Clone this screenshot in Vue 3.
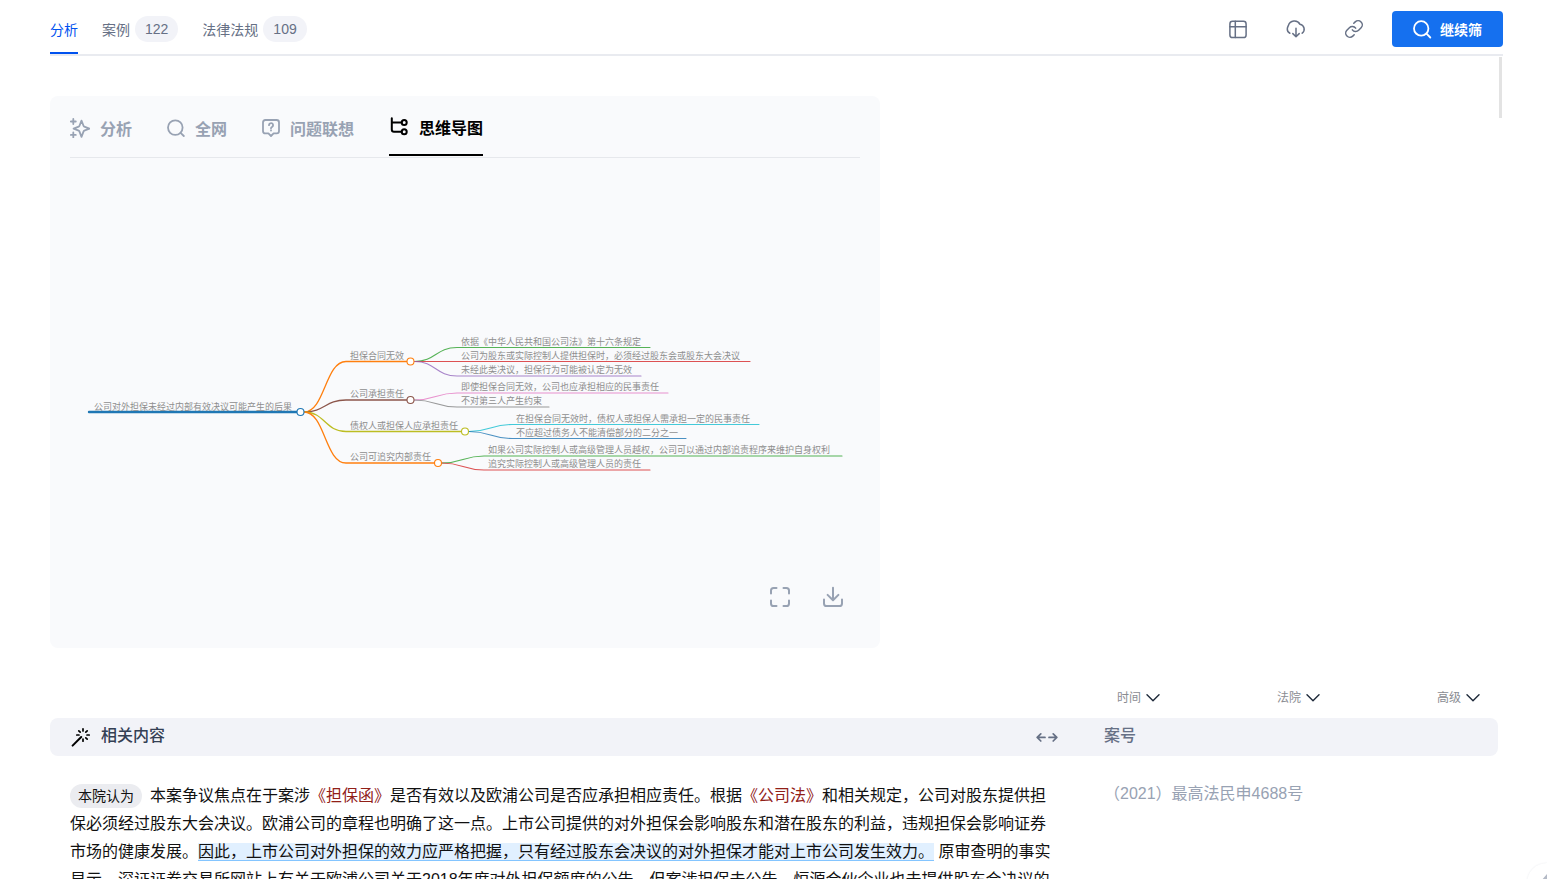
<script setup>
import { ref } from 'vue'

const topTabs = [
  { name: '分析' },
  { name: '案例', count: 122 },
  { name: '法律法规', count: 109 }
]
const currentTop = ref('分析')

const cardTabs = [
  { name: '分析', icon: 'spark' },
  { name: '全网', icon: 'search' },
  { name: '问题联想', icon: 'question' },
  { name: '思维导图', icon: 'tree' }
]
const currentCard = ref('思维导图')

const filters = ['时间', '法院', '高级']

const root = { text: '公司对外担保未经过内部有效决议可能产生的后果', x: 19, y: 254, end: 230, color: '#1f77b4' }
const branches = [
  {
    text: '担保合同无效', y: 203.5, end: 340.5, color: '#ff7f0e', x: 387,
    leaves: [
      { text: '依据《中华人民共和国公司法》第十六条规定', y: 189.5, end: 580, color: '#2ca02c' },
      { text: '公司为股东或实际控制人提供担保时，必须经过股东会或股东大会决议', y: 203.5, end: 680, color: '#d62728' },
      { text: '未经此类决议，担保行为可能被认定为无效', y: 218, end: 571, color: '#9467bd' }
    ]
  },
  {
    text: '公司承担责任', y: 242, end: 340.5, color: '#8c564b', x: 387,
    leaves: [
      { text: '即使担保合同无效，公司也应承担相应的民事责任', y: 235, end: 598, color: '#e377c2' },
      { text: '不对第三人产生约束', y: 249, end: 479, color: '#7f7f7f' }
    ]
  },
  {
    text: '债权人或担保人应承担责任', y: 273.5, end: 395, color: '#bcbd22', x: 442,
    leaves: [
      { text: '在担保合同无效时，债权人或担保人需承担一定的民事责任', y: 266.5, end: 689, color: '#17becf' },
      { text: '不应超过债务人不能清偿部分的二分之一', y: 280.5, end: 616, color: '#1f77b4' }
    ]
  },
  {
    text: '公司可追究内部责任', y: 305, end: 368, color: '#ff7f0e', x: 414,
    leaves: [
      { text: '如果公司实际控制人或高级管理人员越权，公司可以通过内部追责程序来维护自身权利', y: 298, end: 772, color: '#2ca02c' },
      { text: '追究实际控制人或高级管理人员的责任', y: 312, end: 580, color: '#d62728' }
    ]
  }
]

function link(x1, y1, x2, y2, end) {
  const mid = (x1 + x2) / 2
  return `M${x1} ${y1}C${mid} ${y1} ${mid} ${y2} ${x2} ${y2}H${end}`
}
</script>

<template>
  <div class="page">
    <header class="top">
      <nav class="top-tabs">
        <button
          v-for="t in topTabs"
          :key="t.name"
          type="button"
          class="top-tab"
          :class="{ on: currentTop === t.name }"
          @click="currentTop = t.name"
        >
          <span>{{ t.name }}</span>
          <span v-if="t.count" class="count">{{ t.count }}</span>
        </button>
      </nav>
      <div class="tools">
        <button type="button" class="icon-btn" aria-label="表格">
          <svg viewBox="0 0 20 20" width="20" height="20" class="line">
            <rect x="1.9" y="2.3" width="16.2" height="16.2" rx="2.6" />
            <path d="M1.9 7.7H18.1M7.3 2.3V18.5" />
          </svg>
        </button>
        <button type="button" class="icon-btn" aria-label="云下载">
          <svg viewBox="0 0 20 20" width="20" height="20" class="line">
            <path d="M3.9 14.2A4.4 4.4 0 0 1 1.3 10C1.3 8.6 1.9 7.5 2.4 6.5A6.3 6.3 0 0 1 14 5.3A5 5 0 0 1 16.2 14.2" />
            <path d="M10 9.3V17.6M6.8 14.6L10 17.8L13.2 14.6" />
          </svg>
        </button>
        <button type="button" class="icon-btn" aria-label="复制链接">
          <svg viewBox="0 0 24 24" width="20" height="20" class="line link">
            <path d="M10 13a5 5 0 0 0 7.54.54l3-3a5 5 0 0 0-7.07-7.07l-1.72 1.71" />
            <path d="M14 11a5 5 0 0 0-7.54-.54l-3 3a5 5 0 0 0 7.07 7.07l1.71-1.71" />
          </svg>
        </button>
        <button type="button" class="primary">
          <svg viewBox="0 0 20 20" width="20" height="20">
            <circle cx="9.2" cy="9.4" r="7.2" />
            <path d="M14.5 14.7L18.3 18.5" />
          </svg>
          <span>继续筛</span>
        </button>
      </div>
    </header>

    <main class="body">
      <section class="card">
        <nav class="card-tabs">
          <button
            v-for="t in cardTabs"
            :key="t.name"
            type="button"
            class="card-tab"
            :class="{ on: currentCard === t.name }"
            @click="currentCard = t.name"
          >
            <svg v-if="t.icon === 'spark'" viewBox="0 0 20 20" width="20" height="20">
              <path d="M11.5 2.6L13.6 8Q13.8 8.5 14.3 8.7L19.4 10.7L14.3 12.7Q13.8 12.9 13.6 13.4L11.5 18.8L9.4 13.4Q9.2 12.9 8.7 12.7L3.6 10.7L8.7 8.7Q9.2 8.5 9.4 8Z" />
              <path d="M3.3 1V6M.8 3.5H5.8M3.3 14.4V19.4M.8 16.9H5.8" />
            </svg>
            <svg v-else-if="t.icon === 'search'" viewBox="0 0 18 18" width="18" height="18">
              <circle cx="8.3" cy="8.6" r="7.3" />
              <path d="M13.6 13.9L16.8 17" />
            </svg>
            <svg v-else-if="t.icon === 'question'" viewBox="0 0 18 18" width="18" height="18">
              <path d="M3.4 1H14.6Q17 1 17 3.4V12Q17 14.4 14.6 14.4H11.6L9 17L6.4 14.4H3.4Q1 14.4 1 12V3.4Q1 1 3.4 1Z" />
              <path d="M7 6.2A2.05 2.05 0 1 1 10.2 7.8Q9 8.3 9 9.2M9 11.2V11.5" />
            </svg>
            <svg v-else viewBox="0 0 20 20" width="20" height="20">
              <path d="M2.8 1.2V12.6Q2.8 14.8 5 14.8H12.6M2.8 5.4H12.6" />
              <circle cx="15.2" cy="5.4" r="2.5" />
              <circle cx="15.2" cy="14.8" r="2.5" />
            </svg>
            <span>{{ t.name }}</span>
          </button>
        </nav>

        <svg class="map" viewBox="0 0 790 400" role="img" aria-label="思维导图">
          <path :d="`M${root.x} ${root.y}H${root.end}`" :stroke="root.color" stroke-width="2.4" />
          <text :x="24" :y="root.y - 2">{{ root.text }}</text>
          <g v-for="b in branches" :key="b.text">
            <path :d="link(234, root.y, 276, b.y, b.end)" :stroke="b.color" stroke-width="1.3" />
            <text x="280" :y="b.y - 3">{{ b.text }}</text>
            <g v-for="l in b.leaves" :key="l.text">
              <path :d="link(b.end + 4, b.y, b.x, l.y, l.end)" :stroke="l.color" stroke-width="1.1" class="leaf" />
              <text :x="b.x + 4" :y="l.y - 3">{{ l.text }}</text>
            </g>
            <circle :cx="b.end" :cy="b.y" r="3.5" :stroke="b.color" />
          </g>
          <circle :cx="root.end + 0.5" :cy="root.y" r="3.5" :stroke="root.color" />
        </svg>

        <div class="card-tools">
          <button type="button" class="icon-btn" aria-label="全屏">
            <svg viewBox="0 0 22 22" width="22" height="22" class="thick">
              <path d="M2 7.5V4.6Q2 2 4.6 2H7.5M14.5 2H17.4Q20 2 20 4.6V7.5M20 14.5V17.4Q20 20 17.4 20H14.5M7.5 20H4.6Q2 20 2 17.4V14.5" />
            </svg>
          </button>
          <button type="button" class="icon-btn" aria-label="下载">
            <svg viewBox="0 0 22 22" width="22" height="22" class="thick">
              <path d="M11 1.8V14M5.6 8.9L11 14.3L16.4 8.9M2 13.4V17.4Q2 20 4.6 20H17.4Q20 20 20 17.4V13.4" />
            </svg>
          </button>
        </div>
      </section>

      <div class="filters">
        <button v-for="f in filters" :key="f" type="button" class="filter" aria-haspopup="listbox">
          <span>{{ f }}</span>
          <svg viewBox="0 0 14 8" width="14" height="8"><path d="M1 .8L7 6.8L13 .8" /></svg>
        </button>
      </div>

      <table class="results">
        <thead>
          <tr>
            <th class="main-col">
              <div class="head">
                <svg class="wand" viewBox="0 0 20 20" width="20" height="20">
                  <path d="M1.6 18.6L10.2 10" stroke-width="2" />
                  <path d="M12 1.8V4M12 12V14.2M5.8 8H8M16 8H18.2M7.8 3.8L9.2 5.2M16.2 3.8L14.8 5.2M14.8 10.8L16.2 12.2" stroke-width="1.7" />
                </svg>
                <span class="head-name">相关内容</span>
                <button type="button" class="icon-btn" aria-label="调整列宽">
                  <svg viewBox="0 0 22 10" width="22" height="10" class="arrows">
                    <path d="M9 5.4H1.4M4.8 1.8L1.2 5.4L4.8 9M13 5.4H20.6M17.2 1.8L20.8 5.4L17.2 9" />
                  </svg>
                </button>
              </div>
            </th>
            <th class="no-col"><div class="head-no">案号</div></th>
          </tr>
        </thead>
        <tbody>
          <tr>
            <td class="text"><span class="tag">本院认为</span>本案争议焦点在于案涉<span class="law">《担保函》</span>是否有效以及欧浦公司是否应承担相应责任。根据<span class="law">《公司法》</span>和相关规定，公司对股东提供担保必须经过股东大会决议。欧浦公司的章程也明确了这一点。上市公司提供的对外担保会影响股东和潜在股东的利益，违规担保会影响证券市场的健康发展。<mark>因此，上市公司对外担保的效力应严格把握，只有经过股东会决议的对外担保才能对上市公司发生效力。</mark> 原审查明的事实显示，深证证券交易所网站上有关于欧浦公司关于2018年度对外担保额度的公告，但案涉担保未公告，恒源合伙企业也未提供股东会决议的</td>
            <td class="no">（2021）最高法民申4688号</td>
          </tr>
        </tbody>
      </table>
      <div class="thumb"></div>
    </main>

    <button type="button" class="float" aria-label="回到顶部">
      <svg viewBox="0 0 18 18" width="18" height="18"><path d="M9 0L3 7H6V16H12V7H15Z" /></svg>
    </button>
  </div>
</template>

<style>
body {
  margin: 0;
  background: #fff;
}
</style>

<style scoped>
.page {
  display: flex;
  flex-direction: column;
  box-sizing: border-box;
  height: 100vh;
  padding: 0 44px 0 50px;
  overflow: hidden;
  font-family: "Liberation Sans", "Noto Sans CJK SC", sans-serif;
  font-size: 14px;
  color: #667085;
}
button {
  padding: 0;
  border: 0;
  background: none;
  font: inherit;
  color: inherit;
  cursor: pointer;
}
svg {
  display: block;
  fill: none;
  stroke: currentColor;
  stroke-linecap: round;
  stroke-linejoin: round;
}
.top {
  flex: none;
  display: flex;
  justify-content: space-between;
  height: 50px;
  padding-top: 4px;
  border-bottom: 2px solid #e9ebf0;
}
.top-tabs {
  display: flex;
  gap: 24px;
}
.top-tab {
  position: relative;
  display: flex;
  align-items: center;
  gap: 5px;
}
.top-tab.on {
  color: #0052ef;
}
.top-tab.on::after,
.card-tab.on::after {
  content: "";
  position: absolute;
  right: 0;
  bottom: 0;
  left: 0;
  height: 2px;
  background: currentColor;
}
.count {
  padding: 0 10px;
  border-radius: 13px;
  background: #f2f3f8;
  line-height: 26px;
}
.tools {
  display: flex;
  align-items: center;
  gap: 38px;
}
.line {
  stroke-width: 1.5;
}
.link {
  stroke-width: 1.8;
}
.primary {
  display: flex;
  align-items: center;
  gap: 8px;
  height: 36px;
  margin-left: -10px;
  padding: 0 21px 0 20px;
  border-radius: 4px;
  background: #1570ef;
  color: #fff;
  font-weight: 700;
}
.primary svg {
  stroke-width: 1.8;
}
.body {
  position: relative;
  flex: 1;
  min-height: 0;
  padding: 40px 5px 0 0;
  overflow: hidden;
}
.thumb {
  position: absolute;
  top: 1px;
  right: 1px;
  width: 3px;
  height: 61px;
  background: #e3e3e3;
}
.card {
  box-sizing: border-box;
  max-width: 830px;
  padding: 0 20px 40px;
  border-radius: 8px;
  background: #f9fafc;
}
.card-tabs {
  display: flex;
  gap: 35px;
  height: 60px;
  padding-bottom: 1px;
  border-bottom: 1px solid #e6e8ec;
}
.card-tab {
  position: relative;
  display: flex;
  align-items: center;
  gap: 10px;
  padding-top: 3px;
  color: #98a2b3;
  font-size: 16px;
  font-weight: 700;
}
.card-tab svg {
  stroke-width: 1.8;
}
.card-tab.on {
  padding-top: 2px;
  color: #000;
}
.card-tab.on svg {
  stroke-width: 2;
}
.map {
  width: 100%;
  height: auto;
}
.map text {
  fill: #8e8e8e;
  stroke: none;
  font-size: 9px;
}
.map circle {
  fill: #fff;
  stroke-width: 1.1;
}
.leaf {
  stroke-opacity: 0.8;
}
.card-tools {
  display: flex;
  justify-content: flex-end;
  gap: 31px;
  padding: 28px 16px 0 0;
  color: #98a2b3;
}
.thick {
  stroke-width: 2;
}
.filters {
  display: flex;
  justify-content: flex-end;
  gap: 117px;
  padding: 40px 18px 10px 0;
}
.filter {
  display: flex;
  align-items: center;
  gap: 5px;
  color: #8a8c92;
  font-size: 12px;
  line-height: 20px;
}
.filter svg {
  stroke: #1d2939;
  stroke-width: 1.4;
}
.results {
  width: 100%;
  border-collapse: separate;
  border-spacing: 0;
  table-layout: fixed;
}
th {
  height: 38px;
  padding: 0;
  background: #f2f3f8;
  text-align: left;
  font-size: 16px;
  font-weight: 500;
  line-height: 22px;
}
.main-col {
  border-radius: 8px 0 0 8px;
}
.no-col {
  width: 394px;
  padding-left: 20px;
  border-radius: 0 8px 8px 0;
}
.head {
  display: flex;
  align-items: center;
  gap: 10px;
  padding: 0 26px 0 21px;
}
.head-name {
  flex: 1;
  padding-bottom: 2px;
  color: #344054;
}
.head-no {
  padding-bottom: 2px;
}
.wand {
  color: #000;
}
.arrows {
  stroke-width: 1.7;
}
td {
  vertical-align: top;
  font-size: 16px;
  line-height: 28px;
}
.text {
  padding: 26px 28px 0 20px;
  color: #111;
}
.tag {
  display: inline-block;
  margin-right: 8px;
  padding: 0 8px;
  border-radius: 12px;
  background: #ebecf0;
  font-size: 14px;
  line-height: 24px;
}
.law {
  color: #912018;
}
mark {
  border-bottom: 1px solid #84c5ff;
  background: #e1f0ff;
  color: inherit;
}
.no {
  padding: 24px 0 0 20px;
  color: #98a2b3;
}
.float {
  position: fixed;
  right: -20px;
  bottom: -24px;
  display: flex;
  align-items: center;
  justify-content: center;
  width: 40px;
  height: 40px;
  border-radius: 50%;
  background: #fff;
  box-shadow: 0 0 2px #e8eaee;
  color: #b4bac6;
}
.float svg {
  fill: currentColor;
  stroke: none;
}
</style>
